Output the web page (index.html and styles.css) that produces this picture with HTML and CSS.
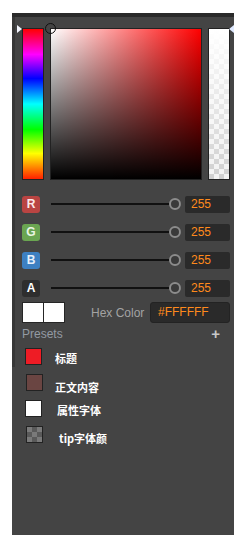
FILE: index.html
```html
<!DOCTYPE html>
<html>
<head>
<meta charset="utf-8">
<link rel="stylesheet" href="styles.css">
</head>
<body>
<div class="panel">
  <div class="picker">
    <div class="hue"><span class="hue-marker"></span></div>
    <div class="sv"><span class="sv-cursor"></span></div>
    <div class="alpha"><span class="alpha-marker"></span></div>
  </div>
  <div class="channels">
    <div class="channel"><span class="badge badge-r">R</span><div class="track"><span class="knob"></span></div><div class="value">255</div></div>
    <div class="channel"><span class="badge badge-g">G</span><div class="track"><span class="knob"></span></div><div class="value">255</div></div>
    <div class="channel"><span class="badge badge-b">B</span><div class="track"><span class="knob"></span></div><div class="value">255</div></div>
    <div class="channel"><span class="badge badge-a">A</span><div class="track"><span class="knob"></span></div><div class="value">255</div></div>
  </div>
  <div class="hex-row">
    <div class="swatches"><span class="swatch"></span><span class="swatch"></span></div>
    <span class="hex-label">Hex Color</span>
    <div class="hex-input">#FFFFFF</div>
  </div>
  <div class="presets-head"><span class="presets-title">Presets</span><span class="add">+</span></div>
  <ul class="presets">
    <li class="preset p1"><span class="chip chip-red"></span><span class="name">标题</span></li>
    <li class="preset p2"><span class="chip chip-brown"></span><span class="name">正文内容</span></li>
    <li class="preset p3"><span class="chip chip-white"></span><span class="name">属性字体</span></li>
    <li class="preset p4"><span class="chip chip-checker"></span><span class="name">tip字体颜</span></li>
  </ul>
</div>
</body>
</html>
```
FILE: styles.css
```css
html, body {
  margin: 0;
  padding: 0;
  background: #fff;
}
body {
  font-family: "Liberation Sans", Arial, sans-serif;
}
.panel {
  margin: 13px 0 0 12px;
  width: 222px;
  height: 522px;
  box-sizing: border-box;
  border-top: 4px solid #2a2a2a;
  background: linear-gradient(#373737, #373737) 0 0 / 3px 350px no-repeat, #444444;
  padding: 11px 4px 0 10px;
}
.picker {
  display: flex;
  gap: 6px;
  height: 152px;
}
.hue {
  position: relative;
  width: 22px;
  box-sizing: border-box;
  border: 1px solid #222;
  background: linear-gradient(to bottom, #ff0000 0%, #ff00ff 17%, #0000ff 33%, #00ffff 50%, #00ff00 67%, #ffff00 83%, #ff2000 100%);
}
.hue-marker {
  position: absolute;
  left: -6px;
  top: -4px;
  width: 0;
  height: 0;
  border-top: 4px solid transparent;
  border-bottom: 4px solid transparent;
  border-left: 5px solid #f4f6ff;
}
.sv {
  position: relative;
  width: 152px;
  box-sizing: border-box;
  border: 1px solid #222;
  background: linear-gradient(to top, #000, rgba(0,0,0,0)), linear-gradient(to right, #fff, #f00);
}
.sv-cursor {
  position: absolute;
  left: -6px;
  top: -6px;
  width: 9px;
  height: 9px;
  border: 1.5px solid #111;
  border-radius: 50%;
}
.alpha {
  position: relative;
  width: 22px;
  box-sizing: border-box;
  border: 1px solid #222;
  background: linear-gradient(to bottom, #fff, rgba(255,255,255,0)), conic-gradient(#cfcfcf 25%, #f2f2f2 0 50%, #cfcfcf 0 75%, #f2f2f2 0) 0 0 / 10px 10px;
}
.alpha-marker {
  position: absolute;
  right: -5px;
  top: -4px;
  width: 0;
  height: 0;
  border-top: 4px solid transparent;
  border-bottom: 4px solid transparent;
  border-right: 5px solid #dfe9ff;
}
.channels {
  margin-top: 15px;
  display: flex;
  flex-direction: column;
  gap: 10px;
}
.channel {
  display: flex;
  align-items: center;
  height: 18px;
}
.badge {
  width: 18px;
  height: 17px;
  border-radius: 3px;
  color: #fff;
  font-weight: bold;
  font-size: 12px;
  display: flex;
  align-items: center;
  justify-content: center;
}
.badge-r { background: #b94442; color: #fbe9e9; }
.badge-g { background: #6aa551; color: #e9f6e4; }
.badge-b { background: #3d80c2; color: #e6f0fb; }
.badge-a { background: #2e2e2e; }
.track {
  margin-left: 11px;
  width: 130px;
  height: 12px;
  background: linear-gradient(#111, #111) center / 100% 2px no-repeat;
  display: flex;
  justify-content: flex-end;
}
.knob {
  width: 12px;
  height: 12px;
  box-sizing: border-box;
  border-radius: 50%;
  border: 2px solid #8c8c8c;
  background: #3a3a3a;
}
.value {
  margin-left: 4px;
  width: 45px;
  height: 17px;
  box-sizing: border-box;
  padding-left: 6px;
  background: #2a2a2a;
  border-radius: 2px;
  color: #ff8a1c;
  font-size: 12px;
  line-height: 17px;
}
.hex-row {
  margin-top: 5px;
  height: 21px;
  display: flex;
  align-items: center;
}
.swatches {
  display: flex;
  gap: 1px;
  height: 21px;
  box-sizing: border-box;
  border: 1px solid #262626;
  background: #262626;
}
.swatch {
  width: 20px;
  background: #fff;
}
.hex-label {
  margin-left: 26px;
  color: #a3a3a3;
  font-size: 12px;
}
.hex-input {
  margin-left: auto;
  width: 80px;
  height: 21px;
  box-sizing: border-box;
  padding-left: 7px;
  background: #2a2a2a;
  border: 1px solid #232323;
  border-radius: 3px;
  color: #ff8a1c;
  font-size: 12px;
  line-height: 19px;
}
.presets-head {
  margin-top: 3px;
  height: 16px;
  display: flex;
  align-items: center;
  justify-content: space-between;
  padding-right: 10px;
}
.presets-title {
  color: #939aa3;
  font-size: 12px;
}
.add {
  color: #c8c8c8;
  font-weight: bold;
  font-size: 15px;
  line-height: 16px;
}
.presets {
  list-style: none;
  margin: 6px 0 0;
  padding: 0;
}
.preset {
  display: flex;
  align-items: flex-start;
  height: 26px;
}
.chip {
  width: 17px;
  height: 17px;
  box-sizing: border-box;
  border: 1px solid #222;
  margin-left: 3px;
}
.chip-red { background: #ee1c25; }
.chip-brown { background: #6a4542; }
.chip-white { background: #fff; }
.chip-checker {
  background: conic-gradient(#5a5a5a 25%, #7a7a7a 0 50%, #5a5a5a 0 75%, #7a7a7a 0) 0 0 / 10px 10px;
}
.name {
  margin-left: 13px;
  margin-top: 3px;
  color: #fff;
  font-family: "Noto Sans CJK SC", "Liberation Sans", sans-serif;
  font-weight: bold;
  font-size: 11px;
  line-height: 14px;
}
.p2 .chip, .p4 .chip { margin-left: 4px; }
.p2 .name { margin-left: 12px; margin-top: 6px; }
.p3 .name { margin-left: 15px; }
.p4 .name { margin-left: 16px; margin-top: 5px; }
```
